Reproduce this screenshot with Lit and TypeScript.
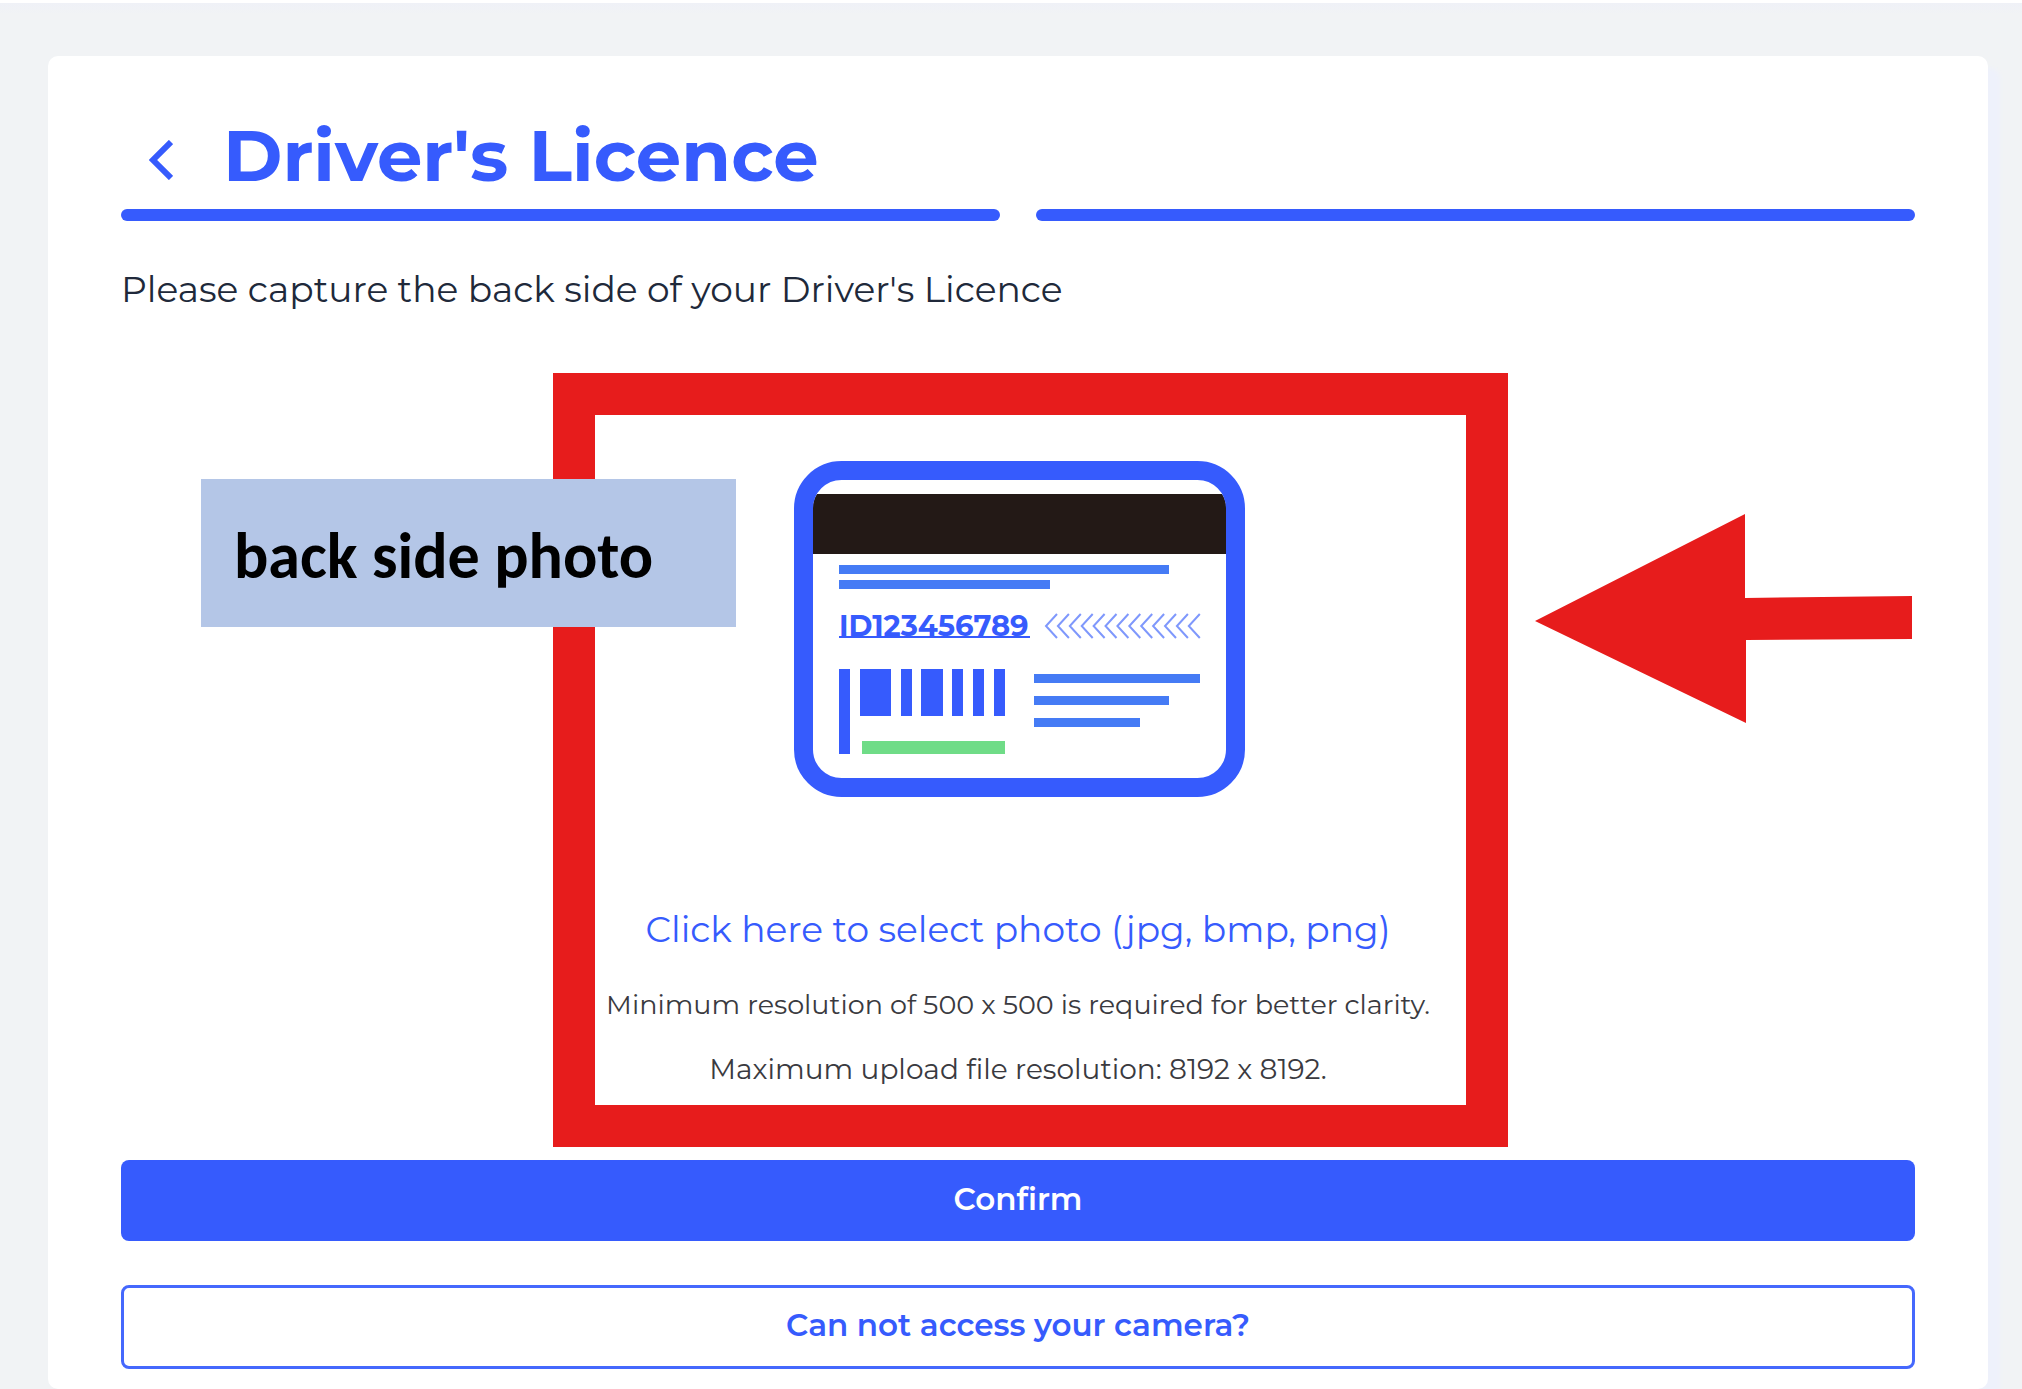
import { LitElement, html, svg, css } from "lit";
import { customElement } from "lit/decorators.js";

/** x, y, width, height, class */
type Bar = [number, number, number, number, string];

const BARS: Bar[] = [
  [45, 104, 330, 9, "line"],
  [45, 119, 211, 9, "line"],
  [45, 208, 11, 85, "blue"],
  [66, 208, 31, 47, "blue"],
  [107, 208, 11, 47, "blue"],
  [127, 208, 22, 47, "blue"],
  [158, 208, 11, 47, "blue"],
  [179, 208, 11, 47, "blue"],
  [200, 208, 11, 47, "blue"],
  [68, 280, 143, 13, "green"],
  [240, 213, 166, 9, "line"],
  [240, 235, 135, 9, "line"],
  [240, 257, 106, 9, "line"],
];

@customElement("licence-back-art")
export class LicenceBackArt extends LitElement {
  static styles = css`
    :host { display: block; box-sizing: border-box; width: 454px; padding-left: 3px; }
    .art { display: block; width: 100%; height: auto; }
    .edge { fill: none; stroke: #365bfd; stroke-width: 19; }
    .stripe { fill: #231916; }
    .line { fill: #457bf5; }
    .blue { fill: #365bfd; }
    .green { fill: #6fdc87; }
    .chevron { fill: none; stroke: #7f98fc; stroke-width: 2; }
    .number { fill: #365bfd; font: 700 29px "Montserrat", "Inter", sans-serif; }
  `;

  render() {
    const chevrons = Array.from({ length: 13 }, (_, i) => 252 + i * 11.9);
    return html`
      <svg class="art" viewBox="0 0 451 336" role="img" aria-label="Back side of a licence">
        <path class="stripe" d="M19 46 Q19 39 23 33 H428 Q432 39 432 46 V93 H19 Z" />
        <rect class="edge" x="9.5" y="9.5" width="432" height="317" rx="38" />
        ${BARS.map(([x, y, w, h, c]) => svg`<rect class=${c} x=${x} y=${y} width=${w} height=${h} />`)}
        <text class="number" x="45" y="175">ID123456789</text>
        <rect class="blue" x="45" y="175" width="191" height="2" />
        ${chevrons.map((x) => svg`<path class="chevron" d="M${x + 11} 153 L${x} 165 L${x + 11} 177" />`)}
      </svg>
    `;
  }
}

@customElement("app-root")
export class AppRoot extends LitElement {
  static styles = css`
    :host {
      display: block;
      font-family: "Montserrat", "Inter", sans-serif;
      color: #20293a;
    }
    * { box-sizing: border-box; }
    .page {
      min-height: 100vh;
      padding: 53px 34px 0 48px;
      border-top: 3px solid #fff;
      background: linear-gradient(#eff1f7, #f1f3f5 12px);
    }
    .card {
      padding: 55px 73px 20px;
      border-radius: 10px;
      background: #fff;
      box-shadow: 12px 12px 4px #eef1fb;
    }
    .head { display: flex; align-items: center; gap: 50px; padding-left: 28px; }
    .back { padding: 10px 0 0; border: 0; background: none; cursor: pointer; }
    .back-icon { display: block; width: 24px; height: 40px; fill: none; stroke: #365bfd; stroke-width: 6; }
    .title { margin: 0; font-size: 72px; line-height: 88px; font-weight: 700; color: #365bfd; }
    .steps { display: grid; grid-template-columns: 1fr 1fr; gap: 36px; margin-top: 10px; }
    .step { height: 12px; border-radius: 6px; background: #365bfd; }
    .lead { margin: 46px 0 0; font-size: 36px; line-height: 44px; }
    .stage { position: relative; margin-top: 150px; }
    .picker { display: flex; flex-direction: column; align-items: center; cursor: pointer; }
    .file { position: absolute; width: 1px; height: 1px; opacity: 0; }
    .prompt { margin-top: 110px; font-size: 36px; line-height: 44px; color: #365bfd; }
    .hints { margin-top: 22px; line-height: 64px; text-align: center; color: #3a3a40; }
    .hint { display: block; font-size: 27px; }
    .hint.limit { font-size: 28px; }
    .frame {
      position: absolute;
      top: -88px;
      bottom: -46px;
      left: calc(50% - 465px);
      width: 955px;
      border: 42px solid #e71c1c;
      pointer-events: none;
    }
    .note {
      position: absolute;
      top: 18px;
      left: 80px;
      width: 535px;
      padding: 41px 33px 35px;
      background: #b4c6e7;
      color: #000;
      font: 700 64px/72px "Carlito", "Calibri", "Lato", sans-serif;
    }
    .arrow { position: absolute; top: 53px; right: 3px; width: 377px; height: 209px; fill: #e71c1c; }
    .actions { display: flex; flex-direction: column; gap: 44px; margin-top: 59px; }
    .btn {
      padding: 20px 24px 22px;
      border: 0;
      border-radius: 8px;
      background: #365bfd;
      color: #fff;
      font: 600 31px/39px "Montserrat", "Inter", sans-serif;
      cursor: pointer;
    }
    .btn.outline { border: 3px solid #4568fd; padding: 18px 24px 21px; background: #fff; color: #365bfd; }
  `;

  render() {
    return html`
      <main class="page">
        <section class="card">
          <header class="head">
            <button class="back" type="button" aria-label="Back">
              <svg class="back-icon" viewBox="0 0 24 40"><path d="M22 2 L4 20 L22 38" /></svg>
            </button>
            <h1 class="title">Driver's Licence</h1>
          </header>
          <div class="steps"><div class="step"></div><div class="step"></div></div>
          <p class="lead">Please capture the back side of your Driver's Licence</p>

          <div class="stage">
            <input class="file" id="photo" type="file" accept=".jpg,.bmp,.png" />
            <label class="picker" for="photo">
              <licence-back-art></licence-back-art>
              <span class="prompt">Click here to select photo (jpg, bmp, png)</span>
              <span class="hints">
                <span class="hint">Minimum resolution of 500 x 500 is required for better clarity.</span>
                <span class="hint limit">Maximum upload file resolution: 8192 x 8192.</span>
              </span>
            </label>
            <div class="frame"></div>
            <div class="note">back side photo</div>
            <svg class="arrow" viewBox="0 0 377 209" aria-hidden="true">
              <path d="M0 107 L210 0 V84 L377 82 V125 L211 126 V209 Z" />
            </svg>
          </div>

          <div class="actions">
            <button class="btn" type="button">Confirm</button>
            <button class="btn outline" type="button">Can not access your camera?</button>
          </div>
        </section>
      </main>
    `;
  }
}
